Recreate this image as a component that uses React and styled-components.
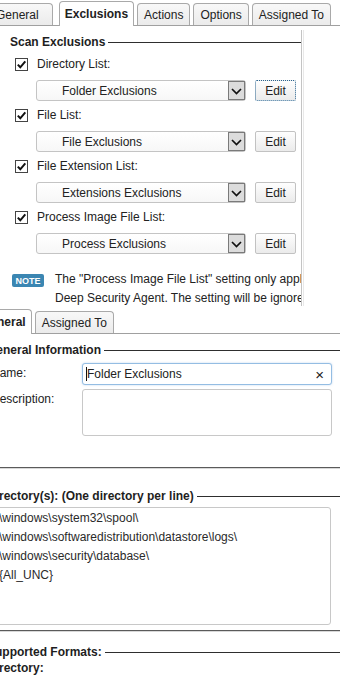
import React from "react";
import styled, { createGlobalStyle, css } from "styled-components";

const GlobalStyle = createGlobalStyle`
  body {
    margin: 0;
    background: #fff;
    font-family: "Liberation Sans", Arial, sans-serif;
    font-size: 12px;
    color: #222;
    overflow: hidden;
  }
`;

const Page = styled.div`
  width: 340px;
  height: 676px;
  overflow: hidden;
  background: #fff;
`;

const TopWindow = styled.div`
  height: 306px;
  overflow: hidden;
`;

const BottomWindow = styled.div`
  margin-left: -14px;
  padding-top: 2px;
`;

const TabBar = styled.div`
  display: flex;
  align-items: stretch;
  gap: 3px;
  height: 24px;
  padding-top: 1px;
  margin-left: ${({ $offset }) => $offset}px;
  border-bottom: 1px solid #a0a0a0;
`;

const Tab = styled.div`
  display: flex;
  align-items: center;
  flex: none;
  padding: ${({ $pad }) => $pad || "0 6px"};
  margin-top: 2px;
  border: 1px solid #a9a9a9;
  border-bottom: none;
  border-radius: 4px 4px 0 0;
  background: linear-gradient(#f8f8f8, #ebebeb);
  white-space: nowrap;
  color: #222;

  ${({ $active }) =>
    $active &&
    css`
      margin: 0 0 -1px 3px;
      padding: 0 5px;
      background: #fff;
      font-weight: bold;
    `}
`;

const Body = styled.div`
  display: flex;
  height: 281px;
`;

const Content = styled.div`
  width: 291px;
  padding-left: 10px;
  overflow: hidden;
`;

const VBorder = styled.div`
  width: 1px;
  border-left: 1px solid #c4c4c4;
  border-right: 1px solid #e8e8e8;
  margin-top: 4px;
`;

const Legend = styled.div`
  display: flex;
  align-items: center;
  gap: 3px;
  height: 16px;
  margin-top: ${({ $top }) => $top}px;
  font-weight: bold;
  white-space: nowrap;
  color: #1e1e1e;

  &::after {
    content: "";
    flex: 1;
    border-top: 1px solid #2e2e2e;
  }
`;

const CheckRow = styled.div`
  display: flex;
  align-items: center;
  gap: 9px;
  height: 14px;
  margin-top: 7px;
  padding-left: 5px;
`;

const Box = styled.span`
  display: inline-flex;
  align-items: center;
  justify-content: center;
  width: 13px;
  height: 13px;
  box-sizing: border-box;
  border: 1px solid #444;
  background: #fff;
  flex: none;
`;

const SelectRow = styled.div`
  display: flex;
  align-items: center;
  gap: 9px;
  margin-top: 9px;
  padding-left: 26px;
`;

const Select = styled.div`
  display: flex;
  width: 210px;
  height: 21px;
  box-sizing: border-box;
  border: 1px solid #c4c4c4;
  border-radius: 3px;
  background: linear-gradient(#fff, #f7f7f7);
`;

const SelectText = styled.div`
  flex: 1;
  display: flex;
  align-items: center;
  padding-left: 25px;
  color: #222;
`;

const Arrow = styled.div`
  display: flex;
  align-items: center;
  justify-content: center;
  width: 17px;
  box-sizing: border-box;
  border: 1px solid #7a7a7a;
  background: #dcdcdc;
`;

const EditButton = styled.div`
  display: flex;
  align-items: center;
  justify-content: center;
  width: 41px;
  height: 21px;
  box-sizing: border-box;
  border: 1px solid #c2c2c2;
  border-radius: 2px;
  background: linear-gradient(#fefefe, #ebebeb);
  color: #222;

  ${({ $focused }) =>
    $focused &&
    css`
      border: 1px dotted #2b6590;
    `}
`;

const NoteRow = styled.div`
  display: flex;
  align-items: flex-start;
  gap: 11px;
  margin-top: 16px;
  padding-left: 2px;
`;

const Badge = styled.span`
  display: flex;
  align-items: center;
  justify-content: center;
  width: 32px;
  height: 13px;
  margin-top: 4px;
  border-radius: 2px;
  background: #3b86b2;
  color: #fff;
  font-size: 9px;
  font-weight: bold;
  flex: none;
`;

const NoteText = styled.div`
  line-height: 19px;
  white-space: nowrap;
  color: #222;
`;

const Section = styled.div`
  padding-left: 1px;
`;

const FormRow = styled.div`
  display: grid;
  grid-template-columns: 91px 250px;
  align-items: start;
  margin-top: ${({ $top }) => $top}px;
  padding-left: 4px;
`;

const Label = styled.div`
  line-height: 20px;
  color: #222;
`;

const TextInput = styled.div`
  display: flex;
  align-items: center;
  height: 22px;
  box-sizing: border-box;
  padding: 0 7px 0 3px;
  border: 1px solid #94bde3;
  border-radius: 3px;
  box-shadow: 0 0 2px rgba(120, 170, 220, 0.5);
  background: #fff;
  color: #222;
`;

const Caret = styled.span`
  width: 1px;
  height: 14px;
  background: #111;
  flex: none;
`;

const InputValue = styled.span`
  flex: 1;
`;

const Clear = styled.span`
  font-size: 15px;
  line-height: 1;
  color: #222;
`;

const TextBox = styled.div`
  height: ${({ $h }) => $h}px;
  box-sizing: border-box;
  border: 1px solid #c8c8c8;
  border-radius: 3px;
  background: #fff;
`;

const Divider = styled.div`
  margin-top: ${({ $top }) => $top}px;
  border-top: 1px solid #5a5a5a;
  border-bottom: 1px solid #d8d8d8;
`;

const DirBox = styled.div`
  width: 348px;
  height: 118px;
  box-sizing: border-box;
  margin: 3px 0 0 -4px;
  padding: 1px 3px;
  border: 1px solid #c8c8c8;
  border-radius: 3px;
  line-height: 19px;
  color: #2a2a2a;
  white-space: pre;
`;

const SubLabel = styled.div`
  margin-top: 1px;
  font-weight: bold;
  line-height: 14px;
  color: #1e1e1e;
`;

const Check = () => (
  <Box>
    <svg width="11" height="11" viewBox="0 0 11 11">
      <path d="M1.8 5.6 L4.3 8.3 L9.3 2.3" fill="none" stroke="#111" strokeWidth="2" />
    </svg>
  </Box>
);

const Chevron = () => (
  <svg width="15" height="12" viewBox="0 0 15 12">
    <polyline points="3,4 7.5,8.5 12,4" fill="none" stroke="#111" strokeWidth="1.7" />
  </svg>
);

const lists = [
  { label: "Directory List:", value: "Folder Exclusions", focused: true },
  { label: "File List:", value: "File Exclusions" },
  { label: "File Extension List:", value: "Extensions Exclusions" },
  { label: "Process Image File List:", value: "Process Exclusions" },
];

const directories = [
  "C:\\windows\\system32\\spool\\",
  "C:\\windows\\softwaredistribution\\datastore\\logs\\",
  "C:\\windows\\security\\database\\",
  "C:{All_UNC}",
].join("\n");

export default function App() {
  return (
    <Page>
      <GlobalStyle />
      <TopWindow>
        <TabBar $offset={-12}>
          <Tab $pad="0 13px 0 7px">General</Tab>
          <Tab $active>Exclusions</Tab>
          <Tab>Actions</Tab>
          <Tab>Options</Tab>
          <Tab>Assigned To</Tab>
        </TabBar>
        <Body>
          <Content>
            <Legend $top={8}>Scan Exclusions</Legend>
            {lists.map((item) => (
              <React.Fragment key={item.label}>
                <CheckRow>
                  <Check />
                  <span>{item.label}</span>
                </CheckRow>
                <SelectRow>
                  <Select>
                    <SelectText>{item.value}</SelectText>
                    <Arrow>
                      <Chevron />
                    </Arrow>
                  </Select>
                  <EditButton $focused={item.focused}>Edit</EditButton>
                </SelectRow>
              </React.Fragment>
            ))}
            <NoteRow>
              <Badge>NOTE</Badge>
              <NoteText>
                <div>The "Process Image File List" setting only applies to Windows</div>
                <div>Deep Security Agent. The setting will be ignored by other agents.</div>
              </NoteText>
            </NoteRow>
          </Content>
          <VBorder />
        </Body>
      </TopWindow>

      <BottomWindow>
        <TabBar $offset={-14}>
          <Tab $active>General</Tab>
          <Tab $pad="0 6px">Assigned To</Tab>
        </TabBar>
        <Section>
          <Legend $top={8}>General Information</Legend>
          <FormRow $top={5}>
            <Label>Name:</Label>
            <TextInput>
              <Caret />
              <InputValue>Folder Exclusions</InputValue>
              <Clear>×</Clear>
            </TextInput>
          </FormRow>
          <FormRow $top={4}>
            <Label>Description:</Label>
            <TextBox $h={47} />
          </FormRow>
        </Section>
        <Divider $top={31} />
        <Section>
          <Legend $top={19}>Directory(s): (One directory per line)</Legend>
          <DirBox>{directories}</DirBox>
        </Section>
        <Divider $top={5} />
        <Section>
          <Legend $top={12}>Supported Formats:</Legend>
          <SubLabel>Directory:</SubLabel>
        </Section>
      </BottomWindow>
    </Page>
  );
}
